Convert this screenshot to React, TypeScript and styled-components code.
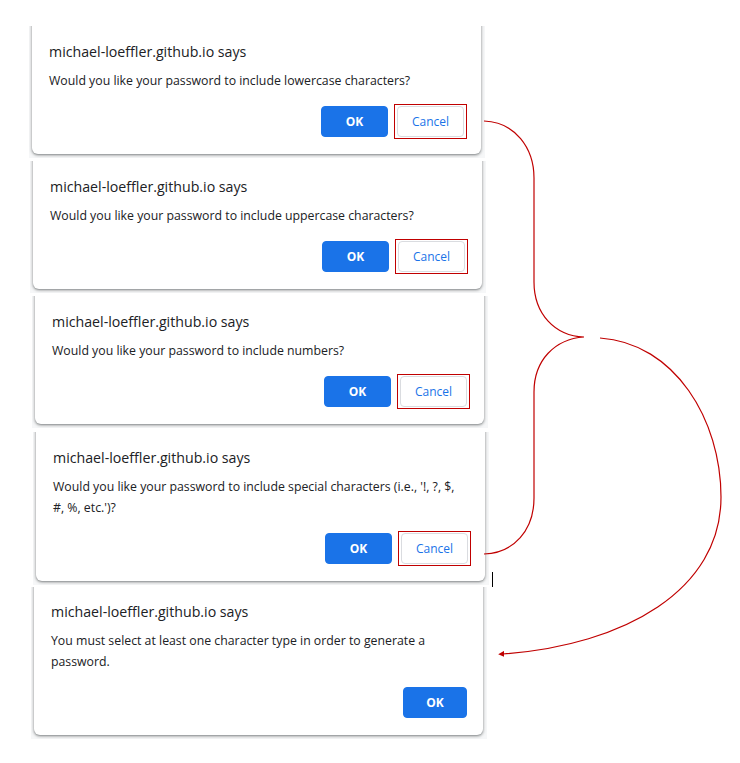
import React from "react";
import styled, { createGlobalStyle } from "styled-components";

const Global = createGlobalStyle`
  html, body { margin: 0; padding: 0; background: #ffffff; }
  body { font-family: "Open Sans", "Noto Sans", sans-serif; }
`;

const Page = styled.div`
  position: relative;
  width: 740px;
  height: 763px;
  overflow: hidden;
`;

const Column = styled.div`
  display: flex;
  flex-direction: column;
  align-items: flex-start;
  padding-top: 26px;
`;

const Tile = styled.div<{ $left: number; $gap: number }>`
  margin-left: ${(p) => p.$left - 3}px;
  margin-bottom: ${(p) => p.$gap}px;
  padding: 0 4px 4px 3px;
  background: #f6f7f8;
  overflow: hidden;
`;

const Dialog = styled.div<{ $padTop: number }>`
  width: 449px;
  box-sizing: border-box;
  margin-top: -10px;
  padding: ${(p) => p.$padTop + 10}px 14px 15px 17px;
  background: #ffffff;
  border-radius: 0 0 6px 6px;
  box-shadow: 0 1px 2px rgba(60, 64, 67, 0.45), 0 1px 3px 1px rgba(60, 64, 67, 0.2);
  display: flex;
  flex-direction: column;
`;

const Title = styled.div`
  font-size: 14.2px;
  line-height: 20px;
  color: #202124;
  margin-bottom: 8px;
`;

const Message = styled.div`
  font-size: 12.3px;
  line-height: 21px;
  color: #202124;
  padding-right: 9px;
`;

const Actions = styled.div`
  display: flex;
  justify-content: flex-end;
  align-items: center;
  gap: 6px;
  min-height: 35px;
  margin-top: 13px;
`;

const Marker = styled.span`
  display: flex;
  padding: 1px 2px;
  border: 1px solid #c00000;
`;

const Button = styled.button<{ $primary?: boolean; $width: number; $end?: number }>`
  width: ${(p) => p.$width}px;
  height: 31px;
  box-sizing: border-box;
  border-radius: 4px;
  font-family: "Open Sans", "Noto Sans", sans-serif;
  font-size: 12px;
  font-weight: ${(p) => (p.$primary ? 700 : 500)};
  cursor: pointer;
  padding: 0;
  border: 1px solid ${(p) => (p.$primary ? "#1a73e8" : "#dadce0")};
  background: ${(p) => (p.$primary ? "#1a73e8" : "#ffffff")};
  color: ${(p) => (p.$primary ? "#ffffff" : "#1a73e8")};
  margin-right: ${(p) => p.$end ?? 0}px;
`;

const Overlay = styled.svg`
  position: absolute;
  left: 0;
  top: 0;
  pointer-events: none;
`;

type Item = {
  left: number;
  gap: number;
  padTop: number;
  message: string;
  cancel: boolean;
};

const host = "michael-loeffler.github.io says";

const items: Item[] = [
  { left: 32, gap: 3, padTop: 16, message: "Would you like your password to include lowercase characters?", cancel: true },
  { left: 33, gap: 3, padTop: 16, message: "Would you like your password to include uppercase characters?", cancel: true },
  { left: 35, gap: 4, padTop: 16, message: "Would you like your password to include numbers?", cancel: true },
  { left: 36, gap: 2, padTop: 16, message: "Would you like your password to include special characters (i.e., '!, ?, $, #, %, etc.')?", cancel: true },
  { left: 34, gap: 0, padTop: 15, message: "You must select at least one character type in order to generate a password.", cancel: false },
];

export default function App() {
  return (
    <Page>
      <Global />
      <Column>
        {items.map((it, i) => (
          <Tile key={i} $left={it.left} $gap={it.gap}>
            <Dialog $padTop={it.padTop}>
              <Title>{host}</Title>
              <Message>{it.message}</Message>
              <Actions>
                <Button $primary $width={it.cancel ? 67 : 64} $end={it.cancel ? 0 : 2}>
                  OK
                </Button>
                {it.cancel && (
                  <Marker>
                    <Button $width={67}>Cancel</Button>
                  </Marker>
                )}
              </Actions>
            </Dialog>
          </Tile>
        ))}
      </Column>
      <Overlay width="740" height="763" viewBox="0 0 740 763">
        <defs>
          <marker id="arrow" viewBox="0 0 10 10" refX="2" refY="5" markerWidth="5" markerHeight="5" orient="auto-start-reverse">
            <path d="M0,0 L10,5 L0,10 z" fill="#c00000" />
          </marker>
        </defs>
        <path
          d="M484,121 C515,122 534,148 534,178 L534,282 C534,314 555,336 584,337 C555,339 534,360 534,392 L534,498 C534,530 514,553 484,554"
          fill="none"
          stroke="#c00000"
          strokeWidth="1.2"
        />
        <path
          d="M600,338 C675,343 721,420 721,497 C721,590 625,645 503,654"
          fill="none"
          stroke="#c00000"
          strokeWidth="1.2"
          markerEnd="url(#arrow)"
        />
        <line x1="492.5" y1="572" x2="492.5" y2="587" stroke="#000000" strokeWidth="1" />
      </Overlay>
    </Page>
  );
}
